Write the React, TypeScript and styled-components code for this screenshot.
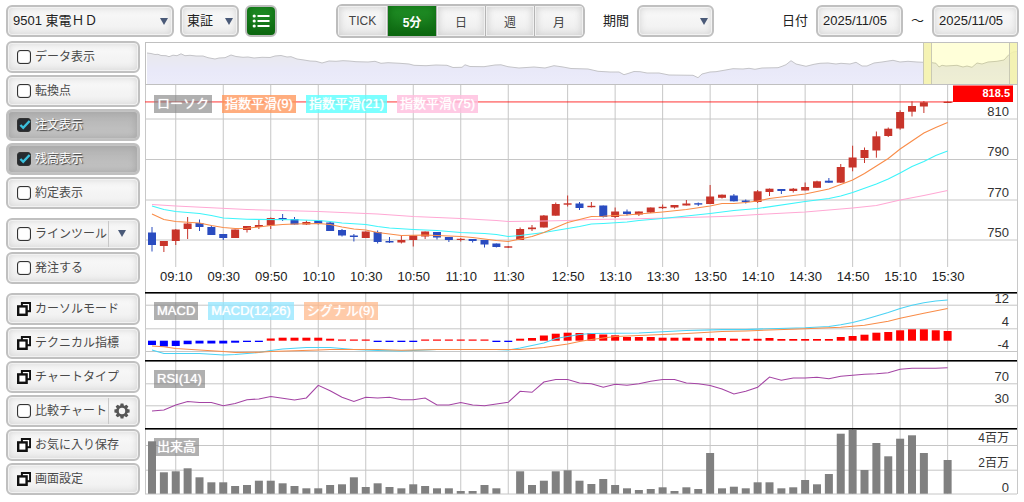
import React, { useState } from "react";
import styled, { createGlobalStyle, css } from "styled-components";

const GlobalStyle = createGlobalStyle`
  *, *::before, *::after { box-sizing: border-box; }
  body {
    margin: 0;
    background: #fff;
    color: #222;
    font-family: "Liberation Sans", "Noto Sans CJK JP", sans-serif;
    font-size: 13px;
  }
  button, input, select { font: inherit; color: inherit; margin: 0; }
`;

/* ---------- shared looks ---------- */

const bevel = css`
  border: 2px solid #c0c0c0;
  border-radius: 6px;
  background: linear-gradient(#fafafa, #efefef);
  box-shadow: inset 0 0 0 1px #f2f2f2, inset 0 0 7px 1px #d4d4d4;
`;

const pressed = css`
  background: linear-gradient(#b2b2b2, #c6c6c6);
  box-shadow: inset 0 0 0 1px #c4c4c4, inset 0 0 7px 2px #a6a6a6;
`;

const green = css`
  background: linear-gradient(#24962a, #0d6410);
  box-shadow: inset 0 0 8px 1px #0c6a10;
`;

/* ---------- toolbar ---------- */

const Page = styled.div`
  padding: 5px 5px 4px 6px;
`;

const Toolbar = styled.header`
  display: flex;
  align-items: center;
  gap: 6px;
  height: 32px;
`;

const SelectBox = styled.div<{ $width: number }>`
  position: relative;
  width: ${(p) => p.$width}px;
  height: 32px;
`;

const Select = styled.select`
  ${bevel}
  appearance: none;
  width: 100%;
  height: 100%;
  padding: 0 20px 2px 5px;
  outline: none;
`;

const SelectArrow = styled.svg`
  position: absolute;
  right: 6px;
  top: 13px;
  pointer-events: none;
`;

const ListButton = styled.button`
  ${green}
  display: grid;
  place-items: center;
  width: 32px;
  height: 32px;
  padding: 0;
  border: 2px solid #bdbdbd;
  border-radius: 6px;
`;

const Segments = styled.div`
  display: flex;
  height: 34px;
  margin: 0 12px 0 53px;
  border: 2px solid #bdbdbd;
  border-radius: 6px;
  overflow: hidden;
`;

const Segment = styled.button<{ $on: boolean }>`
  width: 49px;
  padding: 0;
  border: 0;
  font-size: 12px;
  color: #444;
  background: linear-gradient(#fafafa, #ececec);
  box-shadow: inset 0 0 0 1px #f0f0f0, inset 0 0 7px 2px #d2d2d2;
  & + & { border-left: 1px solid #b4b4b4; }
  ${(p) => p.$on && css`
    ${green}
    color: #fff;
    font-weight: bold;
  `}
`;

const Field = styled.div`
  display: flex;
  align-items: center;
  gap: 8px;
`;

const Caption = styled.label`
  padding-bottom: 3px;
`;

const DateRange = styled(Field)`
  margin-left: auto;
`;

const DateInput = styled.input`
  ${bevel}
  width: 87px;
  height: 32px;
  padding: 0 4px 1px 5px;
  outline: none;
`;

/* ---------- side menu ---------- */

const Body = styled.div`
  display: flex;
  align-items: flex-start;
  gap: 5px;
  margin-top: 4px;
  padding-right: 1px;
`;

const Side = styled.nav`
  display: flex;
  flex-direction: column;
  gap: 9px;
  flex: none;
  width: 134px;
`;

const Group = styled.div`
  display: flex;
  flex-direction: column;
  gap: 2px;
`;

const itemBase = css`
  ${bevel}
  display: flex;
  align-items: center;
  width: 100%;
  height: 32px;
  font-size: 12px;
  color: #4a4a4a;
`;

const MenuButton = styled.button`
  ${itemBase}
  gap: 4px;
  padding: 0 0 0 9px;
  text-align: left;
`;

const MenuText = styled.span`
  padding-bottom: 3px;
`;

const MenuItem = styled.div<{ $on: boolean }>`
  ${itemBase}
  ${(p) => p.$on && css`
    ${pressed}
    color: #fff;
    text-shadow: 1px 1px 1px #333;
  `}
`;

const CheckLabel = styled.label`
  display: flex;
  flex: 1;
  align-items: center;
  gap: 4px;
  height: 100%;
  padding-left: 9px;
  white-space: nowrap;
`;

const CheckWrap = styled.span`
  position: relative;
  display: block;
  width: 14px;
  height: 14px;
`;

const Check = styled.input`
  appearance: none;
  display: block;
  width: 14px;
  height: 14px;
  border: 1px solid #333;
  border-radius: 3px;
  background: #fff;
  box-shadow: inset 0 0 1px #333;
  &:checked { background: #262b30; }
`;

const Tick = styled.svg`
  position: absolute;
  left: 0;
  top: 0;
  pointer-events: none;
`;

const SideAction = styled.button`
  display: grid;
  place-items: center;
  width: 30px;
  height: 26px;
  padding: 0 3px 1px 0;
  border: 0;
  border-left: 1px solid #c8c8c8;
  background: none;
`;

/* ---------- chart ---------- */

const Chart = styled.main`
  flex: 1;
  min-width: 0;
`;

const Panel = styled.section`
  position: relative;
`;

const Plot = styled.svg`
  display: block;
  width: 100%;
  height: auto;
  font-family: "Liberation Sans", "Noto Sans CJK JP", sans-serif;
`;

const Legends = styled.div`
  position: absolute;
  left: 9px;
  top: 10px;
  display: flex;
  gap: 10px;
`;

const Legend = styled.span<{ $color: string }>`
  height: 18px;
  padding: 0 3px;
  line-height: 17px;
  color: #fff;
  background: ${(p) => p.$color};
  text-shadow: 0 0 1px #fff;
  white-space: nowrap;
`;

/* ---------- icons ---------- */

const Arrow = () => (
  <path d="M0 0H8L4 7Z" fill="#4a5a78" />
);

const ListIcon = () => (
  <svg width="18" height="14" viewBox="0 0 18 14" aria-hidden="true">
    <g fill="#fff">
      <circle cx="2.2" cy="2" r="1.6" />
      <circle cx="2.2" cy="7" r="1.6" />
      <circle cx="2.2" cy="12" r="1.6" />
      <rect x="5.5" y="1" width="12" height="2" />
      <rect x="5.5" y="6" width="12" height="2" />
      <rect x="5.5" y="11" width="12" height="2" />
    </g>
  </svg>
);

const WindowIcon = () => (
  <svg width="14" height="14" viewBox="0 0 14 14" aria-hidden="true">
    <rect x="4.9" y="1" width="8.2" height="8.2" fill="#fff" stroke="#111" strokeWidth="2" />
    <rect x="1.2" y="4.4" width="8.4" height="8.4" fill="#fff" stroke="#111" strokeWidth="2.4" />
  </svg>
);

const GearIcon = () => (
  <svg width="16" height="16" viewBox="-8 -8 16 16" aria-hidden="true">
    <circle r="4.5" fill="none" stroke="#555" strokeWidth="2.6" />
    {[0, 45, 90, 135, 180, 225, 270, 315].map((a) => (
      <path key={a} d="M-1.9 -5L-1.4 -7.6H1.4L1.9 -5Z" fill="#555" transform={`rotate(${a})`} />
    ))}
  </svg>
);

/* ---------- data: one slot per five-minute bar ---------- */

type Pt = [number, number];
const X = (i: number) => 152 + 11.875 * i;
const line = (pts: Pt[]) => pts.map(([i, y]) => `${X(i)},${y}`).join(" ");

const TIMES: [number, string][] = [
  [2, "09:10"], [6, "09:30"], [10, "09:50"], [14, "10:10"], [18, "10:30"], [22, "10:50"],
  [26, "11:10"], [30, "11:30"], [35, "12:50"], [39, "13:10"], [43, "13:30"], [47, "13:50"],
  [51, "14:10"], [55, "14:30"], [59, "14:50"], [63, "15:10"], [67, "15:30"],
];

/* slot, body top, body bottom, wick top, wick bottom, rising (1) or falling (0) */
const CANDLES: [number, number, number, number, number, number][] = [
  [0, 232.5, 245, 227, 251.5, 0], [1, 241, 246, 241, 252, 1], [2, 229.5, 241, 229, 245, 1],
  [3, 223.5, 229, 217, 239, 1], [4, 223, 227, 219.5, 231, 0], [5, 227, 235, 225.5, 235, 0],
  [6, 234, 238, 234, 240, 0], [7, 229.5, 238, 229.5, 238, 1], [8, 226, 230, 226, 232.5, 1],
  [9, 225, 227, 220, 229, 1], [10, 218, 225.5, 217.5, 229, 1], [11, 218, 219.5, 214, 221, 0],
  [12, 219, 224.5, 217, 224.5, 0], [13, 222, 224.5, 220.5, 225, 1], [14, 220.5, 223.5, 220.5, 224.5, 0],
  [15, 222.5, 231, 222, 231, 0], [16, 230, 235.5, 229, 236.5, 0], [17, 235.5, 237, 234, 241.5, 0],
  [18, 231.5, 238, 231.5, 238, 1], [19, 232, 242, 230.5, 243.5, 0], [20, 241, 242.5, 237, 243, 0],
  [21, 240, 242.5, 236, 243.5, 1], [22, 235.5, 240, 235.5, 246.5, 1], [23, 231.5, 236.5, 231.5, 239, 1],
  [24, 232, 237.5, 232, 239.5, 0], [25, 237, 240, 237, 242, 0], [26, 238.8, 240, 238, 241.5, 1],
  [27, 239, 241, 239, 242.5, 0], [28, 240, 244.5, 240, 247.5, 0], [29, 243.5, 247, 243.5, 247.5, 0],
  [30, 246.3, 247.7, 246, 248, 1], [31, 229, 240, 227.5, 240, 1], [32, 227.5, 229.2, 225, 231, 1],
  [33, 215.5, 227.5, 215, 227.5, 1], [34, 204, 215.7, 202.5, 215.7, 1], [35, 203.3, 204.7, 195.5, 206.5, 1],
  [36, 203.5, 208, 202, 210, 0], [37, 205.8, 207.2, 202, 207.5, 1], [38, 205.5, 217, 205.5, 217.5, 0],
  [39, 211.5, 217, 207.5, 218, 1], [40, 211.5, 214, 209.5, 215.5, 0], [41, 211.5, 214.5, 211.5, 216, 1],
  [42, 207.5, 212.5, 207.5, 213, 1], [43, 206.8, 208.2, 204.5, 209, 1], [44, 205, 207.5, 205, 208.5, 1],
  [45, 203.5, 205.5, 200, 205.5, 1], [46, 203.2, 204.6, 202.5, 206, 0], [47, 196.5, 204, 185, 204, 1],
  [48, 194.7, 197.8, 194.5, 198.5, 1], [49, 195.5, 201.3, 194, 201.5, 0], [50, 200.5, 202, 199.5, 203.5, 0],
  [51, 191.3, 202, 190, 203, 1], [52, 188.7, 192, 188.5, 196, 1], [53, 189, 191, 189, 194, 0],
  [54, 188.7, 191, 188, 192.5, 1], [55, 187, 190.5, 182.5, 190.5, 1], [56, 181.3, 187.8, 180.7, 187.8, 1],
  [57, 180.7, 182.7, 178, 183, 0], [58, 167, 182.7, 164, 183, 1], [59, 157.5, 167.5, 145.7, 171.3, 1],
  [60, 150, 158, 147.5, 163, 1], [61, 136.3, 150.5, 131.5, 157.7, 1], [62, 128.7, 136, 127.5, 137, 1],
  [63, 112, 128.5, 110.3, 129.7, 1], [64, 106, 111.7, 101.3, 116.5, 1], [65, 102.3, 106.5, 101, 113, 1],
  [67, 101.7, 103, 101.5, 103, 1],
];

const EMA9: Pt[] = [
  [0, 214], [1, 219.5], [2, 221.5], [4, 223], [5, 225.5], [6, 227.5], [7, 228.5], [8, 228.3], [9, 227],
  [10, 225.5], [11, 224.5], [12, 224], [14, 223.5], [15, 224.5], [16, 227], [17, 229], [18, 230],
  [19, 232.5], [20, 234], [21, 235.5], [23, 235], [24, 235.5], [26, 236.5], [27, 237.5], [28, 239],
  [29, 240.5], [30, 241.5], [31, 239], [32, 236.5], [33, 232.5], [34, 227.5], [35, 222.5], [36, 219.5],
  [37, 216.5], [38, 216.3], [39, 215.5], [40, 215], [41, 214], [43, 212], [45, 209.5], [47, 206],
  [48, 203.5], [49, 203.5], [50, 202.5], [51, 201], [52, 198.5], [54, 195.5], [55, 194], [56, 191.5],
  [57, 189], [58, 184.5], [59, 180], [60, 173.5], [61, 166], [62, 158.5], [63, 149], [64, 141],
  [65, 133], [66, 127.5], [67, 122.5],
];

const EMA21: Pt[] = [
  [0, 206], [1, 209.5], [2, 211.5], [4, 213.5], [5, 215.5], [6, 218], [8, 219.3], [12, 219.7], [14, 220.5],
  [15, 221.5], [16, 223], [18, 224.5], [19, 226.5], [20, 228], [22, 229.5], [24, 230.5], [26, 232.5],
  [28, 233.5], [29, 234.5], [30, 236.5], [31, 235.5], [33, 232.5], [35, 228.5], [36, 226.5], [37, 224],
  [38, 223.5], [40, 222], [41, 220.5], [43, 218.5], [45, 216], [47, 213.5], [49, 210.5], [51, 208.5],
  [55, 201.5], [57, 198.5], [58, 196], [59, 192.5], [61, 184], [62, 179], [63, 173], [64, 166.5],
  [65, 161.5], [66, 155.5], [67, 151],
];

const EMA75: Pt[] = [
  [0, 204.5], [2, 206], [8, 209.5], [14, 211.5], [16, 212.5], [19, 214], [22, 216.5], [24, 217.5],
  [26, 218.5], [29, 220.5], [30, 221.5], [33, 221], [35, 220.5], [37, 219.5], [40, 219], [45, 217.5],
  [48, 216.5], [49, 216], [51, 214.5], [55, 212], [59, 208], [61, 205.5], [63, 200], [65, 195.5], [67, 190.5],
];

/* histogram bar ends; above the zero line is drawn red, below it blue */
const MACD_ZERO = 340.7;
const MACD_BARS = [
  345, 346.5, 346, 344.2, 343.5, 343.5, 343.5, 342.7, 342, 342, 338.5, 337.7, 337.7, 337.7, 337.7, 338.7,
  339.5, 339.5, 339.5, 342, 342, 342, 342, 339.5, 339.5, 339.5, 339.5, 339.5, 339.5, 342, 342, 338.7,
  338, 335.5, 333.7, 332.7, 333, 333, 334.5, 335.3, 337, 337, 337, 337.7, 337.7, 337.7, 337.7, 338, 338,
  338.7, 338.8, 338.8, 338, 339, 339, 339, 339, 339, 337, 336, 334.7, 332.7, 332, 330.3, 329.3, 329.3, 330.3, 331,
];

const MACD_LINE: Pt[] = [
  [0, 350], [1, 353.5], [4, 353.5], [5, 354.2], [6, 355], [7, 354.5], [9, 352.5], [10, 350.5], [11, 349],
  [13, 347.5], [15, 347.5], [17, 349.5], [19, 350.5], [21, 351], [24, 349.5], [29, 349.5], [30, 350],
  [31, 348], [33, 343], [34, 338.5], [35, 336.5], [36, 334.5], [37, 333.5], [41, 333], [45, 330.5],
  [48, 329.6], [50, 329.6], [52, 328.7], [55, 327.7], [57, 326.5], [58, 324.7], [59, 322.5], [60, 319.5],
  [61, 316], [62, 312.5], [63, 308.5], [64, 305.3], [65, 302.7], [66, 301], [67, 300],
];

const SIGNAL_LINE: Pt[] = [
  [0, 346], [1, 346.7], [2, 348.5], [4, 350], [6, 351.5], [7, 352.5], [9, 352.3], [10, 351.5], [12, 350.7],
  [14, 350], [15, 349.5], [19, 349.5], [21, 350.2], [24, 349.5], [31, 349.5], [33, 347.5], [35, 344],
  [36, 341.5], [37, 339.5], [39, 336.5], [43, 334.5], [45, 333.5], [48, 331.5], [50, 331], [52, 330],
  [55, 328.7], [58, 327.3], [60, 325.3], [62, 321.3], [63, 318.3], [65, 313.3], [67, 308.5],
];

const RSI = [
  411, 410, 405, 401.5, 402.5, 402.5, 405.7, 403.5, 399.7, 399, 396.5, 398.3, 400, 398, 385.3, 390.7, 397.3,
  401.5, 397.3, 398, 397.3, 399.7, 399.7, 398, 405, 405, 402.5, 405, 405.7, 404, 402.3, 391.3, 392.3, 382,
  379.5, 379.5, 383, 383.7, 387.3, 384.3, 385.3, 383.7, 381.3, 379.5, 379.5, 383, 383.7, 385.5, 389, 394,
  391.3, 387.3, 377, 380.3, 378, 378, 377.3, 378.7, 376.3, 375.3, 374.3, 373.7, 372.7, 369.3, 368.3, 368.3,
  368.3, 367.7,
];

const VOLUME_BASE = 493.7;
/* bar tops; 0 marks a slot without trades */
const VOLUME = [
  441.3, 472.3, 471.3, 468.3, 477.3, 482.3, 482.3, 486, 485, 480.7, 480.7, 483.3, 486, 488.3, 488.3, 485,
  484.3, 477.3, 487, 483.3, 487, 488.3, 484.3, 486, 488.3, 488.3, 491, 491, 485, 488.3, 0, 471.3, 485,
  480.7, 471.3, 470.3, 480.7, 484, 479, 485, 488.3, 490, 489, 487.3, 491, 487.3, 489, 453, 488.3, 486.7,
  488.3, 482.3, 482.3, 488.3, 487.3, 480, 484.3, 474, 433.7, 430, 470, 443, 456.3, 438.7, 435.3, 453, 0, 460,
];

const OVERVIEW =
  "147,53 151,53.5 155,54.5 158,54.3 161,55.5 166,55.7 169,56.7 173,55.2 177,55.7 181,53.8 185,55.7 190,55.3 196,56 203,56 208,57.7 215,59 219,58 225,57.7 231,55 236,56.5 243,57.3 248,57 254,58 262,57.3 270,57.5 275,56 281,55.5 287,57 291,56.7 297,59 304,60 310,61 316,61.3 322,63 329,61 336,61.3 343,60.7 349,61 356,61.7 368,62 375,61.3 381,63.3 388,62.7 400,63.3 409,64 414,65.3 426,65.7 436,65 447,65.3 453,67.5 462,67.3 465,64.8 470,66.5 484,66.7 495,65 501,64.8 508,66.7 519,68 534,67 545,68 554,65.7 563,67 571,68.5 588,69 598,71.3 610,72 619,72 624,74.7 628,73.5 634,71.5 640,71.7 647,73 659,73 669,75 693,75.3 698,77.7 702,74 710,72 716,71.7 724,70.3 733,68.7 743,69 749,68.3 755,69.3 762,68 778,67.7 782,66.3 786,64.7 791,60.7 796,64 806,66.3 814,64.3 820,63.3 828,63 836,64 841,63.3 850,64 856,62.3 862,66 867,66 874,63 882,62 893,60.3 900,62 908,61.3 917,62 932,62.7 936,63.3 939,67 942,65.3 946,66 957,65.3 963,67 967,66 972,67.3 977,63 982,64 988,62 997,61.3 1004,60 1009,54.5 1013,52 1017,51.5";

const GRID = "#c6c6c6";

const VGrid = ({ y1, y2 }: { y1: number; y2: number }) => (
  <g stroke={GRID}>
    {TIMES.map(([i]) => (
      <line key={i} x1={X(i)} x2={X(i)} y1={y1} y2={y2} />
    ))}
  </g>
);

const HGrid = ({ ys }: { ys: number[] }) => (
  <g stroke={GRID}>
    {ys.map((y) => (
      <line key={y} x1={145} x2={1017} y1={y} y2={y} />
    ))}
  </g>
);

const Sides = ({ y1, y2 }: { y1: number; y2: number }) => (
  <g stroke="#c8c8c8">
    <line x1={145.5} x2={145.5} y1={y1} y2={y2} />
    <line x1={1017.5} x2={1017.5} y1={y1} y2={y2} />
  </g>
);

const Separator = ({ y }: { y: number }) => (
  <rect x={145} y={y} width={872} height={1.6} fill="#000" />
);

const AxisLabels = ({ items, size = 13 }: { items: [string, number][]; size?: number }) => (
  <g fill="#333" fontSize={size} textAnchor="end">
    {items.map(([t, y]) => (
      <text key={t} x={1009} y={y}>{t}</text>
    ))}
  </g>
);

const Overview = () => (
  <Panel>
    <Plot viewBox="145 41 873 44" role="img" aria-label="全期間">
      <defs>
        <linearGradient id="ov" x1="0" y1="0" x2="0" y2="1">
          <stop offset="0" stopColor="#e9e9ec" />
          <stop offset="0.6" stopColor="#e9e9f9" />
          <stop offset="1" stopColor="#ececfa" />
        </linearGradient>
      </defs>
      <polygon points={`147,84 ${OVERVIEW} 1017,84`} fill="url(#ov)" />
      <polyline points={OVERVIEW} fill="none" stroke="#c4c4c8" />
      <rect x={932} y={43} width={78} height={41} fill="#ffff00" fillOpacity={0.15} />
      <rect x={924} y={43} width={8} height={41} fill="#f5f3b4" />
      <rect x={1010} y={43} width={7} height={41} fill="#f5f3a8" fillOpacity={0.85} />
      <g stroke="#c9c9b4">
        <line x1={923.5} x2={923.5} y1={43} y2={84} />
        <line x1={931.5} x2={931.5} y1={43} y2={84} />
        <line x1={1009.5} x2={1009.5} y1={43} y2={84} />
      </g>
      <rect x={145.5} y={42.5} width={872} height={42} fill="none" stroke="#c0c0c0" />
    </Plot>
  </Panel>
);

const PricePanel = () => (
  <Panel>
    <Plot viewBox="145 85 873 207" role="img" aria-label="ローソク足">
      <VGrid y1={85} y2={267} />
      <HGrid ys={[119, 159.5, 200, 240]} />
      <Sides y1={85} y2={292} />
      <line x1={145} x2={953} y1={101.9} y2={101.9} stroke="#ff0000" strokeOpacity={0.46} strokeWidth={1.8} />
      {CANDLES.map(([i, t, b, h, l, up]) => (
        <g key={i} fill={up ? "#c8342a" : "#2a4cc0"}>
          <rect x={X(i) - 0.5} y={h} width={1} height={l - h} />
          <rect x={X(i) - 4} y={t} width={8} height={b - t} />
        </g>
      ))}
      <g fill="none" strokeWidth={1.1}>
        <polyline points={line(EMA75)} stroke="#ffa8d4" />
        <polyline points={line(EMA21)} stroke="#3cf4fa" />
        <polyline points={line(EMA9)} stroke="#f98c48" />
      </g>
      <rect x={953} y={85.5} width={60} height={16.5} fill="#ff0000" />
      <text x={1010} y={97} fill="#fff" fontSize={11} fontWeight="bold" textAnchor="end">818.5</text>
      <AxisLabels items={[["810", 116], ["790", 156], ["770", 197], ["750", 237]]} />
      <g fill="#222" fontSize={13} textAnchor="middle">
        {TIMES.map(([i, t]) => (
          <text key={t} x={X(i) + 0.5} y={281}>{t}</text>
        ))}
      </g>
    </Plot>
    <Legends>
      <Legend $color="rgba(128, 128, 128, 0.62)">ローソク</Legend>
      <Legend $color="rgba(255, 150, 90, 0.78)">指数平滑(9)</Legend>
      <Legend $color="rgba(95, 255, 255, 0.82)">指数平滑(21)</Legend>
      <Legend $color="rgba(255, 190, 222, 0.82)">指数平滑(75)</Legend>
    </Legends>
  </Panel>
);

const MacdPanel = () => (
  <Panel>
    <Plot viewBox="145 292 873 68" role="img" aria-label="MACD">
      <VGrid y1={292} y2={360} />
      <HGrid ys={[305.2, 328.8, 351.5]} />
      <Sides y1={292} y2={360} />
      {MACD_BARS.map((y, i) => (
        <rect
          key={i}
          x={X(i) - 4}
          y={Math.min(y, MACD_ZERO)}
          width={8}
          height={Math.abs(y - MACD_ZERO)}
          fill={y < MACD_ZERO ? "#ff0000" : "#0000ff"}
        />
      ))}
      <g fill="none" strokeWidth={1.1}>
        <polyline points={line(MACD_LINE)} stroke="#4ad2f4" />
        <polyline points={line(SIGNAL_LINE)} stroke="#f98c48" />
      </g>
      <AxisLabels items={[["12", 303], ["4", 326], ["-4", 349]]} />
      <Separator y={292} />
    </Plot>
    <Legends>
      <Legend $color="rgba(128, 128, 128, 0.62)">MACD</Legend>
      <Legend $color="rgba(145, 230, 255, 0.75)">MACD(12,26)</Legend>
      <Legend $color="rgba(255, 185, 140, 0.75)">シグナル(9)</Legend>
    </Legends>
  </Panel>
);

const RsiPanel = () => (
  <Panel>
    <Plot viewBox="145 360 873 68" role="img" aria-label="RSI">
      <VGrid y1={360} y2={428} />
      <HGrid ys={[383.8, 405.8]} />
      <Sides y1={360} y2={428} />
      <polyline points={line(RSI.map((y, i): Pt => [i, y]))} fill="none" stroke="#a444a4" strokeWidth={1.1} />
      <AxisLabels items={[["70", 381], ["30", 403]]} />
      <Separator y={360} />
    </Plot>
    <Legends>
      <Legend $color="rgba(128, 128, 128, 0.62)">RSI(14)</Legend>
    </Legends>
  </Panel>
);

const VolumePanel = () => (
  <Panel>
    <Plot viewBox="145 428 873 68" role="img" aria-label="出来高">
      <VGrid y1={428} y2={494} />
      <HGrid ys={[445.5, 470.2, 494]} />
      <Sides y1={428} y2={494} />
      {VOLUME.map((y, i) =>
        y ? <rect key={i} x={X(i) - 4} y={y} width={8} height={VOLUME_BASE - y} fill="#808080" /> : null
      )}
      <AxisLabels size={12} items={[["4百万", 442], ["2百万", 467]]} />
      <AxisLabels items={[["0", 492]]} />
      <Separator y={428} />
    </Plot>
    <Legends>
      <Legend $color="rgba(128, 128, 128, 0.62)">出来高</Legend>
    </Legends>
  </Panel>
);

/* ---------- composed controls ---------- */

const DropDown = ({ id, width, label, options }: {
  id: string;
  width: number;
  label?: string;
  options: string[];
}) => (
  <SelectBox $width={width}>
    <Select id={id} aria-label={label} defaultValue={options[0]}>
      {options.map((o) => (
        <option key={o}>{o}</option>
      ))}
    </Select>
    <SelectArrow width="8" height="7" aria-hidden="true"><Arrow /></SelectArrow>
  </SelectBox>
);

const CheckItem = ({ label, initial = false, children }: {
  label: string;
  initial?: boolean;
  children?: React.ReactNode;
}) => {
  const [on, setOn] = useState(initial);
  return (
    <MenuItem $on={on}>
      <CheckLabel>
        <CheckWrap>
          <Check type="checkbox" checked={on} onChange={() => setOn(!on)} />
          {on && (
            <Tick width="14" height="14" viewBox="0 0 14 14" aria-hidden="true">
              <path d="M3.4 7L6.2 9.8L12.6 3" fill="none" stroke="#3cc0dc" strokeWidth="2.4" />
            </Tick>
          )}
        </CheckWrap>
        <MenuText>{label}</MenuText>
      </CheckLabel>
      {children}
    </MenuItem>
  );
};

const WindowItem = ({ label }: { label: string }) => (
  <MenuButton type="button"><WindowIcon /><MenuText>{label}</MenuText></MenuButton>
);

const PERIODS = ["TICK", "5分", "日", "週", "月"];

export default function App() {
  const [period, setPeriod] = useState("5分");
  return (
    <>
      <GlobalStyle />
      <Page>
        <Toolbar>
          <DropDown id="issue" width={168} label="銘柄" options={["9501 東電ＨＤ"]} />
          <DropDown id="market" width={59} label="市場" options={["東証"]} />
          <ListButton type="button" aria-label="一覧"><ListIcon /></ListButton>
          <Segments>
            {PERIODS.map((p) => (
              <Segment key={p} type="button" $on={p === period} onClick={() => setPeriod(p)}>{p}</Segment>
            ))}
          </Segments>
          <Field>
            <Caption htmlFor="span">期間</Caption>
            <DropDown id="span" width={77} options={[""]} />
          </Field>
          <DateRange>
            <Caption htmlFor="from">日付</Caption>
            <DateInput id="from" defaultValue="2025/11/05" />
            <Caption htmlFor="to">～</Caption>
            <DateInput id="to" defaultValue="2025/11/05" />
          </DateRange>
        </Toolbar>
        <Body>
          <Side>
            <Group>
              <CheckItem label="データ表示" />
              <CheckItem label="転換点" />
              <CheckItem label="注文表示" initial />
              <CheckItem label="残高表示" initial />
              <CheckItem label="約定表示" />
            </Group>
            <Group>
              <CheckItem label="ラインツール">
                <SideAction type="button" aria-label="ラインツールの種類">
                  <svg width="8" height="7" aria-hidden="true"><Arrow /></svg>
                </SideAction>
              </CheckItem>
              <CheckItem label="発注する" />
            </Group>
            <Group>
              <WindowItem label="カーソルモード" />
              <WindowItem label="テクニカル指標" />
              <WindowItem label="チャートタイプ" />
              <CheckItem label="比較チャート">
                <SideAction type="button" aria-label="比較チャートの設定"><GearIcon /></SideAction>
              </CheckItem>
              <WindowItem label="お気に入り保存" />
              <WindowItem label="画面設定" />
            </Group>
          </Side>
          <Chart>
            <Overview />
            <PricePanel />
            <MacdPanel />
            <RsiPanel />
            <VolumePanel />
          </Chart>
        </Body>
      </Page>
    </>
  );
}
